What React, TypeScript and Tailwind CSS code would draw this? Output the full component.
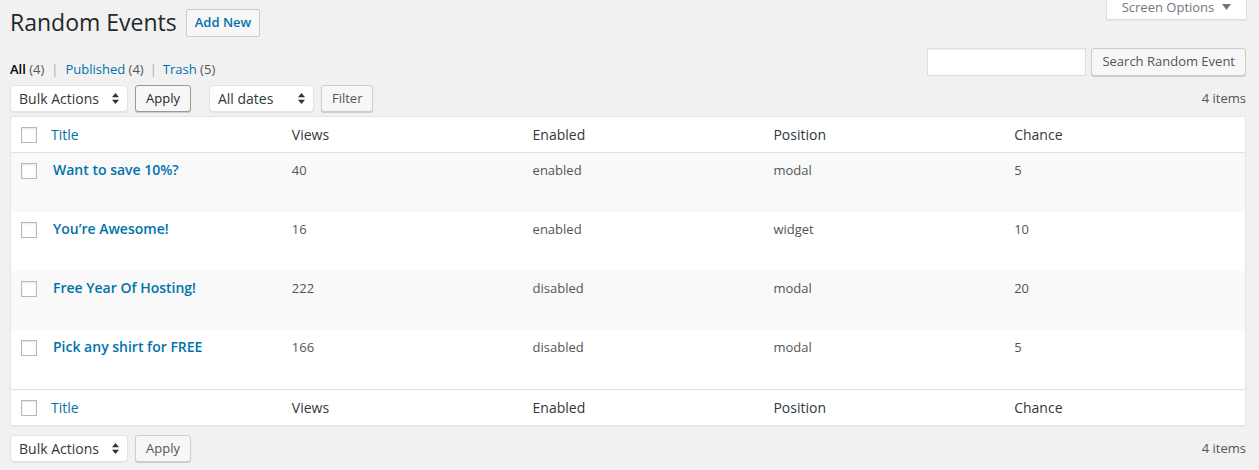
import { ReactNode } from "react";

type EventRow = {
  title: string;
  views: number;
  enabled: string;
  position: string;
  chance: number;
};

const rows: EventRow[] = [
  { title: "Want to save 10%?", views: 40, enabled: "enabled", position: "modal", chance: 5 },
  { title: "You’re Awesome!", views: 16, enabled: "enabled", position: "widget", chance: 10 },
  { title: "Free Year Of Hosting!", views: 222, enabled: "disabled", position: "modal", chance: 20 },
  { title: "Pick any shirt for FREE", views: 166, enabled: "disabled", position: "modal", chance: 5 },
];

const cols = "grid grid-cols-[30px_repeat(5,minmax(0,1fr))]";

function Checkbox() {
  return (
    <span className="block w-[16px] h-[16px] bg-white border border-[#b4b9be] shadow-[inset_0_1px_2px_rgba(0,0,0,0.1)]" />
  );
}

function SelectBox({ label, width }: { label: string; width: string }) {
  return (
    <div
      className={`${width} h-[27px] flex items-center justify-between pl-[8px] pr-[8px] bg-white border border-[#e3e3e3] rounded-[4px] shadow-[0_1px_1px_rgba(0,0,0,0.06)] text-[14px] text-[#32373c]`}
    >
      <span>{label}</span>
      <svg width="7" height="11" viewBox="0 0 7 11">
        <path d="M3.5 0 L7 4.2 L0 4.2 Z" fill="#333" />
        <path d="M3.5 11 L7 6.8 L0 6.8 Z" fill="#333" />
      </svg>
    </div>
  );
}

function Button({ children, dark }: { children: ReactNode; dark?: boolean }) {
  return (
    <button
      className={`h-[27px] px-[10px] bg-[#f7f7f7] border rounded-[3px] shadow-[0_1px_0_#ccc] text-[13px] leading-none ${
        dark ? "border-[#999] text-[#23282d]" : "border-[#ccc] text-[#555]"
      }`}
    >
      {children}
    </button>
  );
}

function TableNav({ top }: { top?: boolean }) {
  return (
    <div className="flex items-center h-[27px]">
      <SelectBox label="Bulk Actions" width="w-[118px]" />
      <div className="ml-[7px]">
        <Button dark={top}>Apply</Button>
      </div>
      {top && (
        <>
          <div className="ml-[18px]">
            <SelectBox label="All dates" width="w-[105px]" />
          </div>
          <div className="ml-[7px]">
            <Button>Filter</Button>
          </div>
        </>
      )}
      <span className="ml-auto text-[13px] text-[#555]">4 items</span>
    </div>
  );
}

function HeaderRow({ footer }: { footer?: boolean }) {
  return (
    <div
      className={`${cols} h-[36px] items-center text-[14px] text-[#32373c] ${
        footer ? "border-t border-[#e1e1e1]" : "border-b border-[#e1e1e1]"
      }`}
    >
      <div className="pl-[10px]">
        <Checkbox />
      </div>
      <div className="pl-[10px] text-[#0073aa]">Title</div>
      <div className="pl-[10px]">Views</div>
      <div className="pl-[10px]">Enabled</div>
      <div className="pl-[10px]">Position</div>
      <div className="pl-[10px]">Chance</div>
    </div>
  );
}

export default function App() {
  return (
    <div className="min-h-[470px] bg-[#f1f1f1] pl-[10px] pr-[13px] font-['Open_Sans','Liberation_Sans',sans-serif] text-[13px] text-[#444]">
      <div className="flex items-start">
        <div className="flex items-center pt-[8px]">
          <h1 className="text-[23px] leading-[29px] text-[#23282d]">Random Events</h1>
          <button className="ml-[9px] h-[28px] px-[8px] bg-[#f7f7f7] border border-[#ccc] rounded-[2px] text-[13px] font-semibold text-[#0073aa]">
            Add New
          </button>
        </div>
        <div className="ml-auto -mr-[1px] w-[141px] h-[20px] flex items-start justify-center gap-[8px] bg-white border border-t-0 border-[#ddd] shadow-[0_1px_1px_rgba(0,0,0,0.04)] text-[13px] leading-[14px] text-[#72777c]">
          <span>Screen Options</span>
          <svg width="9" height="6" viewBox="0 0 9 6" className="mt-[4px]">
            <path d="M0 0 L9 0 L4.5 6 Z" fill="#72777c" />
          </svg>
        </div>
      </div>

      <div className="flex items-start mt-[11px]">
        <div className="mt-[11px] leading-[20px] text-[13px] text-[#555]">
          <span className="font-semibold text-black">All</span> (4)
          <span className="mx-[7px] text-[#aaa]">|</span>
          <span className="text-[#0073aa]">Published</span> (4)
          <span className="mx-[6px] text-[#aaa]">|</span>
          <span className="text-[#0073aa]">Trash</span> (5)
        </div>
        <div className="ml-auto flex items-center">
          <input
            aria-label="Search"
            className="w-[159px] h-[28px] bg-white border border-[#ddd] shadow-[inset_0_1px_2px_rgba(0,0,0,0.07)] outline-none"
          />
          <button className="ml-[5px] h-[28px] px-[10px] bg-[#f7f7f7] border border-[#ccc] rounded-[3px] shadow-[0_1px_0_#ccc] text-[13px] text-[#555]">
            Search Random Event
          </button>
        </div>
      </div>

      <div className="mt-[6px]">
        <TableNav top />
      </div>

      <div className="mt-[4px] bg-white border border-[#e5e5e5] shadow-[0_1px_1px_rgba(0,0,0,0.04)]">
        <HeaderRow />
        {rows.map((r, i) => (
          <div
            key={r.title}
            className={`${cols} h-[59px] items-start text-[13px] text-[#555] ${
              i % 2 === 0 ? "bg-[#f9f9f9]" : "bg-white"
            }`}
          >
            <div className="pl-[10px] pt-[10px]">
              <Checkbox />
            </div>
            <div className="pl-[12px] pt-[7px] leading-[20px] text-[14px] font-semibold text-[#0073aa]">
              {r.title}
            </div>
            <div className="pl-[10px] pt-[7px] leading-[20px]">{r.views}</div>
            <div className="pl-[10px] pt-[7px] leading-[20px]">{r.enabled}</div>
            <div className="pl-[10px] pt-[7px] leading-[20px]">{r.position}</div>
            <div className="pl-[10px] pt-[7px] leading-[20px]">{r.chance}</div>
          </div>
        ))}
        <HeaderRow footer />
      </div>

      <div className="mt-[9px]">
        <TableNav />
      </div>
    </div>
  );
}
